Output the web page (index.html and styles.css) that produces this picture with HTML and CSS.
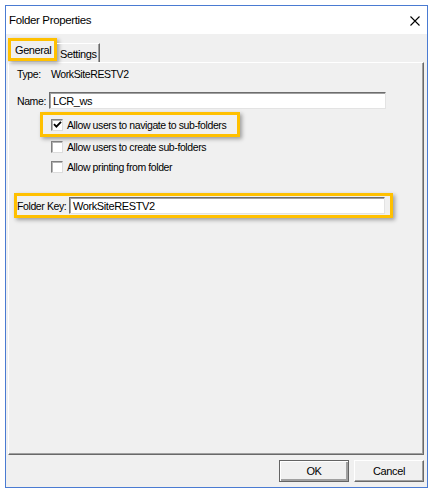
FILE: index.html
```html
<!DOCTYPE html>
<html>
<head>
<meta charset="utf-8">
<link rel="stylesheet" href="styles.css">
</head>
<body>
<div class="window">
  <div class="titlebar">
    <span class="title">Folder Properties</span>
    <svg class="close" width="10" height="10" viewBox="0 0 10 10"><path d="M0.5 0.5 L9.5 9.5 M9.5 0.5 L0.5 9.5" stroke="#000" stroke-width="1.1" fill="none"/></svg>
  </div>
  <div class="client">
    <div class="tabs">
      <div class="tab tab-active hl">General</div>
      <div class="tab tab-settings">Settings</div>
    </div>
    <div class="panel">
      <div class="row row-type"><span class="lbl lbl-type">Type:</span><span>WorkSiteRESTV2</span></div>
      <div class="row row-name"><span class="lbl lbl-name">Name:</span><div class="input input-name">LCR_ws</div></div>
      <div class="row cb-hl hl">
        <span class="cb checked"><svg width="9" height="9" viewBox="0 0 9 9"><path d="M1 4.2 L3.4 6.6 L8 1.8" stroke="#000" stroke-width="1.8" fill="none"/></svg></span>
        <span>Allow users to navigate to sub-folders</span>
      </div>
      <div class="row cb-row"><span class="cb"></span><span>Allow users to create sub-folders</span></div>
      <div class="row cb-row"><span class="cb"></span><span>Allow printing from folder</span></div>
      <div class="row key-hl hl"><span class="lbl lbl-key">Folder Key:</span><div class="input input-key">WorkSiteRESTV2</div></div>
    </div>
    <div class="buttons">
      <div class="btn btn-default">OK</div>
      <div class="btn">Cancel</div>
    </div>
  </div>
</div>
</body>
</html>
```
FILE: styles.css
```css
* { box-sizing: border-box; }
html, body { margin: 0; padding: 0; background: #fff; }
body {
  font-family: "Liberation Sans", Arial, sans-serif;
  font-size: 10.5px;
  letter-spacing: -0.4px;
  color: #000;
}
.window {
  margin: 5px;
  width: 423px;
  height: 483px;
  border: 1px solid #4a7bd2;
  display: flex;
  flex-direction: column;
  background: #fff;
}
.titlebar {
  height: 28px;
  flex: none;
  display: flex;
  align-items: center;
  justify-content: space-between;
  padding: 0 7px 0 3px;
  background: #fff;
}
.title { font-size: 11.5px; letter-spacing: -0.35px; }
.close { display: block; margin-top: 1px; }
.client {
  flex: 1;
  background: #f0f0f0;
  display: flex;
  flex-direction: column;
  padding: 4px 3px 5px 2px;
}
.tabs {
  display: flex;
  height: 24px;
  flex: none;
  position: relative;
  z-index: 2;
}
.tab {
  display: flex;
  align-items: center;
}
.hl {
  border: 3px solid #ffc000;
  box-shadow: 2px 2px 4px rgba(0,0,0,0.35);
}
.tab-active {
  width: 49px;
  height: 23px;
  padding-left: 4px;
  background: #f0f0f0;
  font-size: 11px;
}
.tab-settings {
  margin-top: 5px;
  width: 43px;
  height: 19px;
  padding-left: 3px;
  padding-top: 1px;
  border-top: 1px solid #fff;
  border-right: 1px solid #696969;
  box-shadow: inset -1px 0 #a0a0a0;
  font-size: 11px;
}
.panel {
  flex: 1;
  border-top: 1px solid #fff;
  border-left: 1px solid #fff;
  border-right: 1px solid #696969;
  border-bottom: 1px solid #696969;
  box-shadow: inset -1px -1px #a0a0a0;
  display: flex;
  flex-direction: column;
}
.row {
  display: flex;
  align-items: center;
  flex: none;
}
.row-type { margin-top: 4px; height: 14px; padding-left: 8px; }
.lbl-type { width: 34px; }
.row-name { margin-top: 11px; height: 17px; padding-left: 8px; }
.lbl-name { width: 32px; }
.input {
  height: 17px;
  background: #fff;
  border-top: 1px solid #6d6d6d;
  border-left: 1px solid #6d6d6d;
  border-right: 1px solid #e3e3e3;
  border-bottom: 1px solid #e3e3e3;
  box-shadow: inset 1px 1px #a0a0a0;
  display: flex;
  align-items: center;
  padding-left: 3px;
  font-size: 11px;
}
.input-name { width: 337px; }
.cb-hl {
  margin-top: 3px;
  margin-left: 31px;
  width: 200px;
  height: 25px;
  padding-left: 8px;
}
.cb-row {
  height: 20px;
  margin-left: 42px;
}
.cb {
  width: 12px;
  height: 12px;
  flex: none;
  background: #fff;
  border-top: 1px solid #808080;
  border-left: 1px solid #808080;
  border-right: 1px solid #dcdcdc;
  border-bottom: 1px solid #dcdcdc;
  box-shadow: inset 1px 1px #b4b4b4;
  margin-right: 4px;
  display: flex;
  align-items: center;
  justify-content: center;
}
.cb svg { display: block; }
.key-hl {
  margin-top: 16px;
  margin-left: 5px;
  width: 379px;
  height: 25px;
}
.lbl-key { width: 52px; }
.input-key { width: 316px; }
.buttons {
  flex: none;
  display: flex;
  justify-content: flex-end;
  gap: 5px;
  margin-top: 5px;
}
.btn {
  width: 70px;
  height: 22px;
  display: flex;
  align-items: center;
  justify-content: center;
  background: #f0f0f0;
  border-top: 1px solid #fff;
  border-left: 1px solid #fff;
  border-right: 1px solid #696969;
  border-bottom: 1px solid #696969;
  box-shadow: inset -1px -1px #a0a0a0;
  font-size: 11px;
}
.btn-default {
  border: 1px solid #646464;
  box-shadow: inset 1px 1px #fff, inset -2px -2px #a0a0a0;
}
```
